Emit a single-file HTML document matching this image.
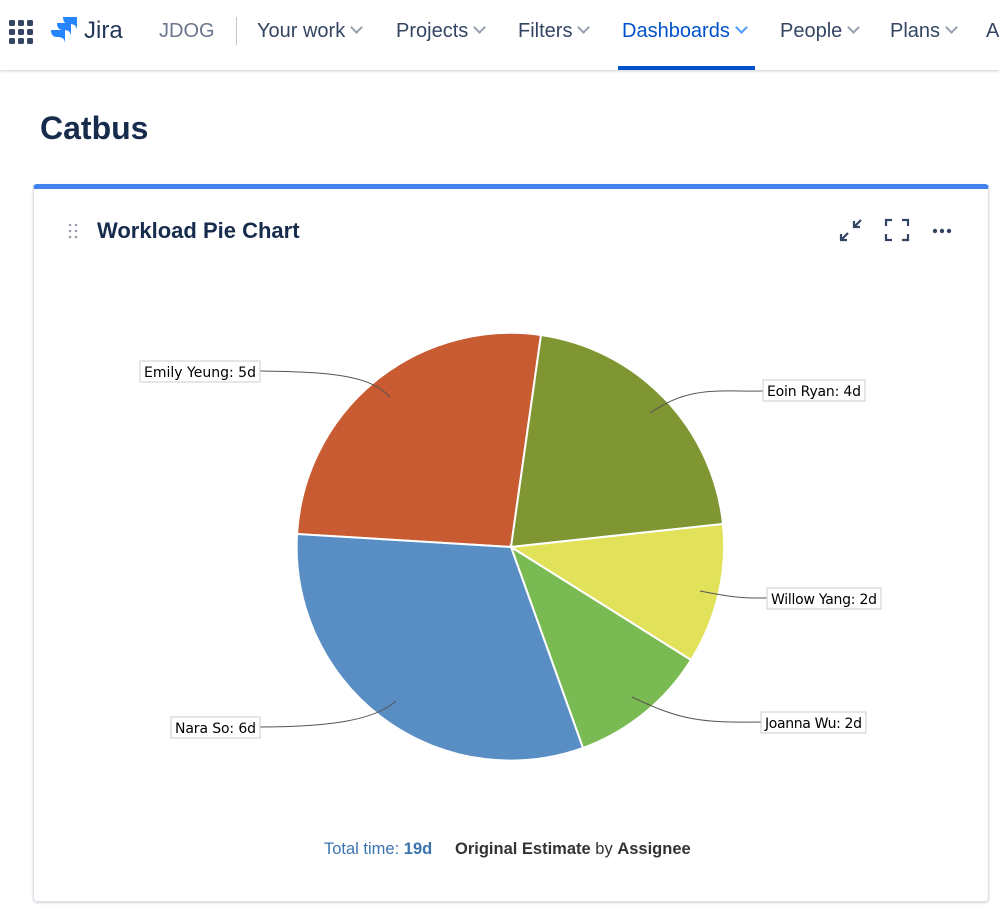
<!DOCTYPE html>
<html><head><style>
body{margin:0;width:999px;height:911px;background:#fff;font-family:"Liberation Sans",sans-serif;overflow:hidden;position:relative}
.nav{position:absolute;left:0;top:0;width:999px;height:70px;border-bottom:1px solid #dfe1e6;box-shadow:0 1px 2px rgba(9,30,66,.12)}
.nav span{position:absolute;top:20px;font-size:20px;color:#344563;white-space:nowrap}
.chev{display:inline-block;width:7px;height:7px;border-right:2px solid #97a0af;border-bottom:2px solid #97a0af;transform:rotate(45deg);margin-left:7px;position:relative;top:-5px}
h1{position:absolute;left:40px;top:110px;margin:0;font-size:32px;font-weight:600;color:#172b4d}
.card{position:absolute;left:33px;top:184px;width:954px;height:712px;border:1px solid #dfe1e6;border-top:5px solid #4282ee;border-radius:4px;box-shadow:0 1px 2px rgba(9,30,66,.2)}
.lbl{font-family:"DejaVu Sans",sans-serif;font-size:14px;fill:#000}
</style></head><body>
<div class="nav">
<svg style="position:absolute;left:9px;top:20px" width="24" height="24"><g fill="#344563"><rect x="0" y="0" width="6" height="6" rx="1.5"/><rect x="9" y="0" width="6" height="6" rx="1.5"/><rect x="18" y="0" width="6" height="6" rx="1.5"/><rect x="0" y="9" width="6" height="6" rx="1.5"/><rect x="9" y="9" width="6" height="6" rx="1.5"/><rect x="18" y="9" width="6" height="6" rx="1.5"/><rect x="0" y="18" width="6" height="6" rx="1.5"/><rect x="9" y="18" width="6" height="6" rx="1.5"/><rect x="18" y="18" width="6" height="6" rx="1.5"/></g></svg>
<svg style="position:absolute;left:0;top:0" width="90" height="50"><g fill="#2684ff"><path d="M63 17H77V31Q77 24 70 24H69Q63 24 63 17Z"/><path d="M57 23H71V37Q71 30 64 30H63Q57 30 57 23Z"/><path d="M51 30H65V44Q65 37 58 37H57Q51 37 51 30Z"/></g></svg>
<span style="left:84px;font-size:24px;color:#253858;top:17px">Jira</span>
<span style="left:159px;color:#6b778c">JDOG</span>
<div style="position:absolute;left:236px;top:17px;width:1px;height:28px;background:#c1c7d0"></div>
<span style="left:257px">Your work<i class="chev"></i></span>
<span style="left:396px">Projects<i class="chev"></i></span>
<span style="left:518px">Filters<i class="chev"></i></span>
<span style="left:622px;color:#0052cc">Dashboards<i class="chev" style="border-color:#4c9aff"></i></span>
<div style="position:absolute;left:618px;top:66px;width:137px;height:4px;background:#0052cc"></div>
<span style="left:780px">People<i class="chev"></i></span>
<span style="left:890px">Plans<i class="chev"></i></span>
<span style="left:986px">A</span>
</div>
<h1>Catbus</h1>
<div class="card"></div>
<svg style="position:absolute;left:0;top:0" width="999" height="911">
<g fill="#97a0af"><circle cx="70" cy="225" r="1.3"/><circle cx="76" cy="225" r="1.3"/><circle cx="70" cy="231" r="1.3"/><circle cx="76" cy="231" r="1.3"/><circle cx="70" cy="237" r="1.3"/><circle cx="76" cy="237" r="1.3"/></g>
<text x="97" y="238" font-size="22" font-weight="bold" fill="#172b4d" font-family="Liberation Sans">Workload Pie Chart</text>
<g stroke="#344563" stroke-width="2.2" fill="none"><path d="M841 240l7-7M841 234v6h6M861 220l-7 7M854 221v6h6"/><path d="M886 226v-6h6M902 220h6v6M886 234v6h6M908 234v6h-6"/></g>
<g fill="#344563"><circle cx="935" cy="231" r="2.2"/><circle cx="942" cy="231" r="2.2"/><circle cx="949" cy="231" r="2.2"/></g>
<g stroke="#fff" stroke-width="2">
<path d="M511 547L297 534A214 214 0 0 1 541 335Z" fill="#c85b31"/>
<path d="M511 547L541 335A214 214 0 0 1 723 524Z" fill="#809632"/>
<path d="M511 547L723 524A214 214 0 0 1 691 660Z" fill="#e1e25a"/>
<path d="M511 547L691 660A214 214 0 0 1 583 748Z" fill="#7aba52"/>
<path d="M511 547L583 748A214 214 0 0 1 297 534Z" fill="#598ec4"/>
</g>
<g stroke="#555" fill="none" stroke-width="1"><path d="M260 371C330 372 370 375 390 397"/><path d="M650 413C690 385 720 392 764 391"/><path d="M700 591C740 599 750 598 768 598"/><path d="M632 697C680 720 700 723 762 722"/><path d="M260 727C330 727 375 720 396 701"/></g>
<g fill="#fff" stroke="#ccc"><rect x="140" y="361" width="120" height="21"/><rect x="763" y="380" width="102" height="21"/><rect x="767" y="588" width="114" height="21"/><rect x="761" y="712" width="105" height="21"/><rect x="171" y="717" width="89" height="21"/></g>
<text class="lbl" x="144" y="377" textLength="112">Emily Yeung: 5d</text>
<text class="lbl" x="767" y="396" textLength="94">Eoin Ryan: 4d</text>
<text class="lbl" x="771" y="604" textLength="106">Willow Yang: 2d</text>
<text class="lbl" x="765" y="728" textLength="97">Joanna Wu: 2d</text>
<text class="lbl" x="175" y="733" textLength="81">Nara So: 6d</text>
<text x="324" y="854" font-size="16.5" font-family="Liberation Sans" fill="#3b73af">Total time: <tspan font-weight="bold">19d</tspan></text>
<text x="455" y="854" font-size="16.5" font-family="Liberation Sans" fill="#333"><tspan font-weight="bold">Original Estimate</tspan> by <tspan font-weight="bold">Assignee</tspan></text>
</svg>
</body></html>
